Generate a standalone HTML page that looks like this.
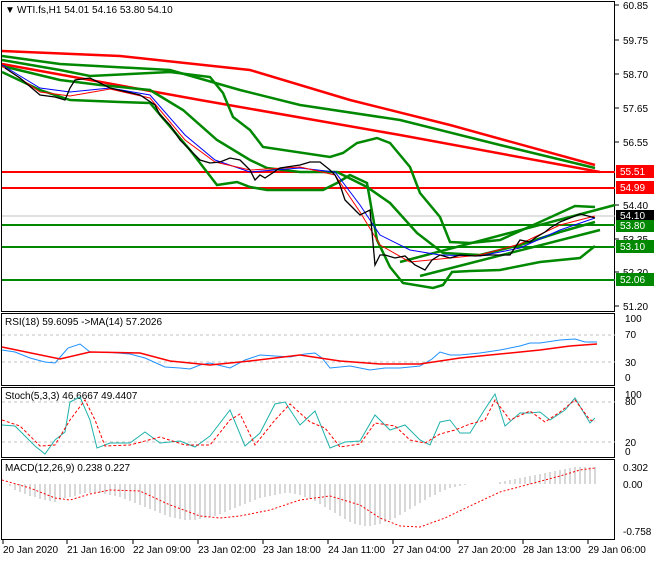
<!DOCTYPE html>
<html><head><meta charset="utf-8"><style>
body{margin:0;background:#fff;width:660px;height:560px;overflow:hidden;font-family:"Liberation Sans",sans-serif}
svg text{font-family:"Liberation Sans",sans-serif;font-size:10px;fill:#000}
</style></head><body>
<svg width="660" height="560" xmlns="http://www.w3.org/2000/svg">
<rect width="660" height="560" fill="#fff"/>
<g fill="none" stroke="#000" stroke-width="1">
<rect x="1.5" y="1.5" width="613" height="310"/>
<rect x="1.5" y="313.5" width="613" height="72"/>
<rect x="1.5" y="387.5" width="613" height="70"/>
<rect x="1.5" y="459.5" width="613" height="80"/>
</g>
<g stroke="#000">
<line x1="615" y1="5" x2="619" y2="5"/><line x1="615" y1="40" x2="619" y2="40"/><line x1="615" y1="74" x2="619" y2="74"/><line x1="615" y1="108" x2="619" y2="108"/><line x1="615" y1="142" x2="619" y2="142"/><line x1="615" y1="205" x2="619" y2="205"/><line x1="615" y1="239" x2="619" y2="239"/><line x1="615" y1="272" x2="619" y2="272"/><line x1="615" y1="306" x2="619" y2="306"/>
</g>
<g>
<text x="623" y="9">60.85</text><text x="623" y="44">59.75</text><text x="623" y="78">58.70</text><text x="623" y="112">57.65</text><text x="623" y="146">56.55</text><text x="623" y="209">54.40</text><text x="623" y="243">53.35</text><text x="623" y="276">52.30</text><text x="623" y="310">51.20</text>
</g>
<text x="5" y="13" font-size="10">▼</text>
<text x="17" y="13">WTI.fs,H1  54.01 54.16 53.80 54.10</text>
<line x1="2" y1="216" x2="615" y2="216" stroke="#c0c0c0"/>
<g stroke-width="2">
<line x1="2" y1="172" x2="615" y2="172" stroke="#f00"/>
<line x1="2" y1="188" x2="615" y2="188" stroke="#f00"/>
<line x1="2" y1="225" x2="615" y2="225" stroke="#080"/>
<line x1="2" y1="247" x2="615" y2="247" stroke="#080"/>
<line x1="2" y1="280" x2="615" y2="280" stroke="#080"/>
</g>
<g fill="none" stroke-width="2.5">
<polyline stroke="#f00" points="2,51 120,56 250,70 350,100 450,125 595,165"/>
<polyline stroke="#f00" points="2,64 200,100 400,135 600,172"/>
<polyline stroke="#080" points="2,56 60,64 170,70 240,90 300,105 400,120 500,145 595,168"/>
<polyline stroke="#080" points="2,60 60,70 90,76 130,74 150,73 170,72 210,77 223,93 233,117 250,130 263,147 330,157 343,153 357,143 377,138 390,143 410,167 420,193 440,217 450,242 470,243 500,240 540,222 575,206 595,207"/>
<polyline stroke="#080" points="2,66 60,80 100,85 150,90 183,110 217,140 250,160 267,168 300,172 337,172 367,187 390,203 417,233 443,253 480,255 520,245 560,232 595,222"/>
<polyline stroke="#080" points="2,72 40,90 70,100 120,102 150,103 190,150 217,185 237,182 250,187 267,190 323,190 337,183 350,175 367,183 377,240 390,267 403,283 433,288 443,285 452,272 470,271 500,270 540,262 580,258 595,246"/>
<polyline stroke="#080" points="400,262 615,205"/>
<polyline stroke="#080" points="420,276 600,230"/>
</g>
<polyline fill="none" stroke="#00f" stroke-width="1" points="2,65 40,88 70,92 110,88 150,95 185,135 215,160 250,172 300,168 335,172 360,205 380,235 410,250 440,255 480,256 520,248 560,230 595,218"/>
<polyline fill="none" stroke="#f00" stroke-width="1" points="2,66 40,92 70,96 110,89 150,98 185,140 215,162 250,170 300,167 335,175 360,212 380,245 410,262 440,259 480,255 520,244 560,225 595,216"/>
<polyline fill="none" stroke="#000" stroke-width="1.3" points="5,68 20,78 40,95 55,97 65,100 70,88 75,80 90,78 110,88 140,95 155,105 160,115 170,125 180,140 190,150 200,160 210,163 220,162 230,158 240,160 250,170 255,180 260,175 265,178 280,168 300,165 310,162 320,162 330,170 335,175 340,185 345,200 355,210 360,215 370,210 375,265 380,255 385,255 395,258 405,256 415,265 425,270 432,260 440,255 450,258 460,255 475,256 490,255 510,255 520,240 530,242 535,238 545,232 550,228 560,222 570,218 580,214 588,216 595,218"/>
<rect x="616" y="165" width="38" height="13" fill="#f00"/><text x="620" y="175" style="fill:#fff">55.51</text>
<rect x="616" y="181" width="38" height="13" fill="#f00"/><text x="620" y="191" style="fill:#fff">54.99</text>
<rect x="616" y="210" width="38" height="11" fill="#000"/><text x="620" y="219" style="fill:#fff">54.10</text>
<rect x="616" y="220" width="38" height="12" fill="#080"/><text x="620" y="229" style="fill:#fff">53.80</text>
<rect x="616" y="240" width="38" height="13" fill="#080"/><text x="620" y="250" style="fill:#fff">53.10</text>
<rect x="616" y="273" width="38" height="13" fill="#080"/><text x="620" y="283" style="fill:#fff">52.06</text>
<g stroke="#c0c0c0" stroke-dasharray="3,3"><line x1="2" y1="335" x2="615" y2="335"/><line x1="2" y1="362" x2="615" y2="362"/></g>
<text x="5" y="325">RSI(18) 59.6095  -&gt;MA(14) 57.2026</text>
<text x="625" y="322">100</text><text x="625" y="338">70</text><text x="625" y="366">30</text><text x="625" y="381">0</text>
<polyline fill="none" stroke="#1e90ff" points="2,350 15,352 30,358 45,362 55,363 62,355 68,348 80,344 90,352 105,352 130,354 145,358 165,367 180,368 190,369 200,365 210,363 230,368 245,360 260,355 275,356 290,357 305,354 315,353 322,358 330,368 350,366 360,368 370,370 385,368 400,368 420,366 432,359 440,352 450,355 460,355 480,353 500,350 520,346 530,343 540,343 560,340 575,339 585,342 597,342"/>
<polyline fill="none" stroke="#f00" stroke-width="1.5" points="2,347 60,359 90,352 140,353 170,361 210,365 250,361 300,355 340,361 380,364 420,364 460,358 500,354 540,350 570,346 597,344"/>
<g stroke="#c0c0c0" stroke-dasharray="3,3"><line x1="2" y1="402" x2="615" y2="402"/><line x1="2" y1="442" x2="615" y2="442"/></g>
<text x="5" y="399">Stoch(5,3,3) 46.6667 49.4407</text>
<text x="625" y="398">100</text><text x="625" y="405">80</text><text x="625" y="446">20</text><text x="625" y="455">0</text>
<polyline fill="none" stroke="#20b2aa" points="2,425 15,426 35,446 45,454 55,440 65,432 70,402 80,397 90,420 97,448 110,443 130,443 145,432 160,443 180,441 195,447 210,436 230,410 245,446 260,433 275,404 285,402 300,425 315,411 330,448 345,442 360,441 375,415 390,430 405,425 420,440 430,445 440,422 450,420 460,433 470,433 485,409 495,394 505,426 520,413 530,413 540,412 550,420 565,410 575,398 590,423 595,418"/>
<polyline fill="none" stroke="#f00" stroke-dasharray="3,2" points="2,420 20,426 40,446 55,445 70,420 85,400 95,420 105,446 130,445 160,437 185,445 210,445 230,420 240,414 255,445 275,420 290,404 310,422 325,428 340,447 360,444 375,423 395,426 410,440 425,443 440,434 455,430 470,424 485,420 495,400 510,420 530,411 545,422 560,412 575,400 590,420 595,421"/>
<text x="5" y="471">MACD(12,26,9) 0.238 0.227</text>
<text x="623" y="471">0.302</text><text x="623" y="488">0.00</text><text x="623" y="535">-0.758</text>
<g stroke="#b0b0b0">
<path d="M10 484V486M15 484V490M20 484V492M25 484V494M30 484V496M35 484V497M40 484V499M45 484V500M50 484V501M55 484V502M60 484V500M65 484V498M70 484V497M75 484V496M80 484V494M85 484V493M90 484V493M95 484V493M100 484V493M105 484V494M110 484V495M115 484V496M120 484V497M125 484V499M130 484V501M135 484V503M140 484V505M145 484V507M150 484V509M155 484V511M160 484V513M165 484V515M170 484V517M175 484V518M180 484V519M185 484V520M190 484V520M195 484V520M200 484V519M205 484V518M210 484V517M215 484V516M220 484V514M225 484V512M230 484V510M235 484V508M240 484V506M245 484V504M250 484V502M255 484V500M260 484V498M265 484V497M270 484V496M275 484V495M280 484V494M285 484V493M290 484V493M295 484V494M300 484V495M305 484V497M310 484V499M315 484V501M320 484V504M325 484V507M330 484V510M335 484V513M340 484V516M345 484V519M350 484V522M355 484V524M360 484V525M365 484V526M370 484V526M375 484V525M380 484V524M385 484V522M390 484V520M395 484V518M400 484V515M405 484V512M410 484V509M415 484V506M420 484V503M425 484V500M430 484V497M435 484V495M440 484V492M445 484V490M450 484V488M455 484V487M460 484V486M465 484V485M470 484V484M500 484V482M505 484V481M510 484V480M515 484V479M520 484V478M525 484V477M530 484V476M535 484V475M540 484V474M545 484V473M550 484V472M555 484V471M560 484V470M565 484V469M570 484V468M575 484V467M580 484V467M585 484V467M590 484V467M595 484V467"/>
</g>
<polyline fill="none" stroke="#f00" stroke-dasharray="2,2" points="2,480 30,488 55,498 70,500 90,494 110,490 140,491 170,505 200,516 220,518 240,516 270,510 300,500 330,496 360,505 380,518 400,526 420,527 445,518 470,506 500,492 530,484 560,476 580,470 595,468"/>
<g stroke="#000"><line x1="3" y1="540" x2="3" y2="544"/><line x1="67" y1="540" x2="67" y2="544"/><line x1="133" y1="540" x2="133" y2="544"/><line x1="198" y1="540" x2="198" y2="544"/><line x1="263" y1="540" x2="263" y2="544"/><line x1="328" y1="540" x2="328" y2="544"/><line x1="393" y1="540" x2="393" y2="544"/><line x1="458" y1="540" x2="458" y2="544"/><line x1="523" y1="540" x2="523" y2="544"/><line x1="588" y1="540" x2="588" y2="544"/></g>
<g><text x="3" y="553">20 Jan 2020</text><text x="67" y="553">21 Jan 16:00</text><text x="133" y="553">22 Jan 09:00</text><text x="198" y="553">23 Jan 02:00</text><text x="263" y="553">23 Jan 18:00</text><text x="328" y="553">24 Jan 11:00</text><text x="393" y="553">27 Jan 04:00</text><text x="458" y="553">27 Jan 20:00</text><text x="523" y="553">28 Jan 13:00</text><text x="588" y="553">29 Jan 06:00</text></g>
</svg>
</body></html>
